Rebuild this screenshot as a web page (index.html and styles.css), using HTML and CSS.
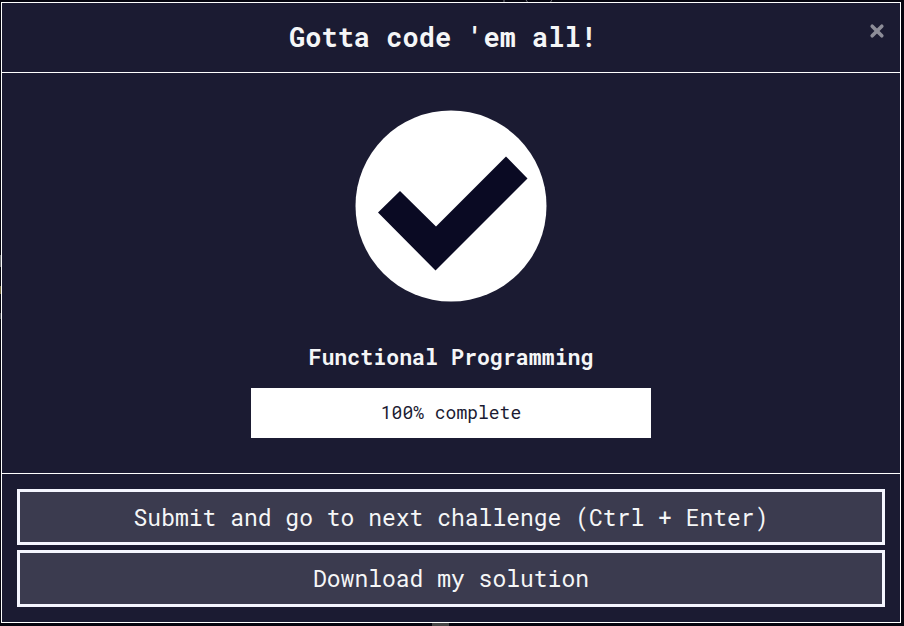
FILE: index.html
```html
<!DOCTYPE html>
<html lang="en">
<head>
<meta charset="utf-8">
<title>Challenge complete</title>
<link rel="stylesheet" href="styles.css">
</head>
<body>
<svg class="peek peek-code" width="50" height="2" viewBox="0 0 50 2"><path d="M2 0V2M24 0 25.500 2M50 0 48.500 2"/></svg>
<div class="peek peek-handle"></div>
<div class="peek peek-line"></div>
<div class="peek peek-line peek-gold"></div>
<div class="peek peek-line peek-low"></div>
<main class="modal" role="dialog" aria-labelledby="title">
  <header class="modal-header">
    <h1 class="title" id="title">Gotta code 'em all!</h1>
    <button class="close" aria-label="Close">
      <svg width="16" height="16" viewBox="0 0 16 16"><path d="M3.200 3.200 12.800 12.800M12.800 3.200 3.200 12.800"/></svg>
    </button>
  </header>
  <section class="modal-body">
    <svg class="check" width="192" height="192" viewBox="0 0 192 192">
      <circle cx="96" cy="96" r="95.5" fill="#fff"/>
      <path d="M23 102.500 45 81 81 116.500 151 46.500 172.500 68.500 80.500 160.500Z" fill="#0a0a23"/>
    </svg>
    <h2 class="course">Functional Programming</h2>
    <div class="progress"><span>100% complete</span></div>
  </section>
  <footer class="modal-footer">
    <button class="btn"><span>Submit and go to next challenge (Ctrl + Enter)</span></button>
    <button class="btn btn-tall"><span>Download my solution</span></button>
  </footer>
</main>
</body>
</html>
```
FILE: styles.css
```css
* { box-sizing: border-box; }
body {
  margin: 0;
  height: 626px;
  padding: 2px 3px 3px 1px;
  overflow: hidden;
  position: relative;
  background: #05050f;
  color: #f5f6f7;
  font-family: "Roboto Mono", "DejaVu Sans Mono", monospace;
}
button { font: inherit; color: inherit; border-radius: 0; }
.modal {
  position: relative;
  height: 621px;
  display: flex;
  flex-direction: column;
  background: #1b1b32;
  border: 1px solid #fff;
}
.modal-header {
  position: relative;
  height: 70px;
  padding: 0 16px 2px 0;
  display: flex;
  align-items: center;
  justify-content: center;
  border-bottom: 1px solid #fff;
}
.title { margin: 0; font-size: 27px; line-height: 36px; font-weight: 700; white-space: pre; }
.close {
  position: absolute;
  top: 20px;
  right: 15px;
  width: 16px;
  height: 16px;
  padding: 0;
  border: 0;
  background: none;
}
.close svg { display: block; }
.close path { fill: none; stroke: #8d8d98; stroke-width: 3.6; stroke-linecap: round; }
.modal-body {
  height: 401px;
  padding-top: 37px;
  display: flex;
  flex-direction: column;
  align-items: center;
  border-bottom: 1px solid #fff;
}
.check { display: block; flex: none; }
.course { margin: 40px 0 0; font-size: 21.6px; line-height: 30px; font-weight: 700; white-space: pre; }
.progress {
  width: 400px;
  height: 50px;
  margin-top: 16px;
  padding-bottom: 2px;
  display: flex;
  align-items: center;
  justify-content: center;
  background: #fff;
  color: #1b1b32;
  font-size: 18px;
}
.modal-footer {
  flex: 1;
  padding: 15px 15px 0;
  display: flex;
  flex-direction: column;
  gap: 5px;
}
.btn {
  height: 56px;
  padding: 0;
  border: 3px solid #f5f6ff;
  background: #3b3b4f;
  font-size: 23px;
  line-height: 30px;
}
.btn-tall { height: 57px; padding-bottom: 1px; }
.peek { position: absolute; }
.peek-code { left: 502px; top: 0; fill: none; stroke: #77777f; }
.peek-handle { left: 432px; top: 623px; width: 17px; height: 3px; background: #464646; }
.peek-line { left: 0; top: 255px; width: 1px; height: 12px; background: #626468; }
.peek-gold { top: 286px; height: 8px; background: #6c6238; }
.peek-low { top: 313px; height: 6px; background: #44464e; }
```
